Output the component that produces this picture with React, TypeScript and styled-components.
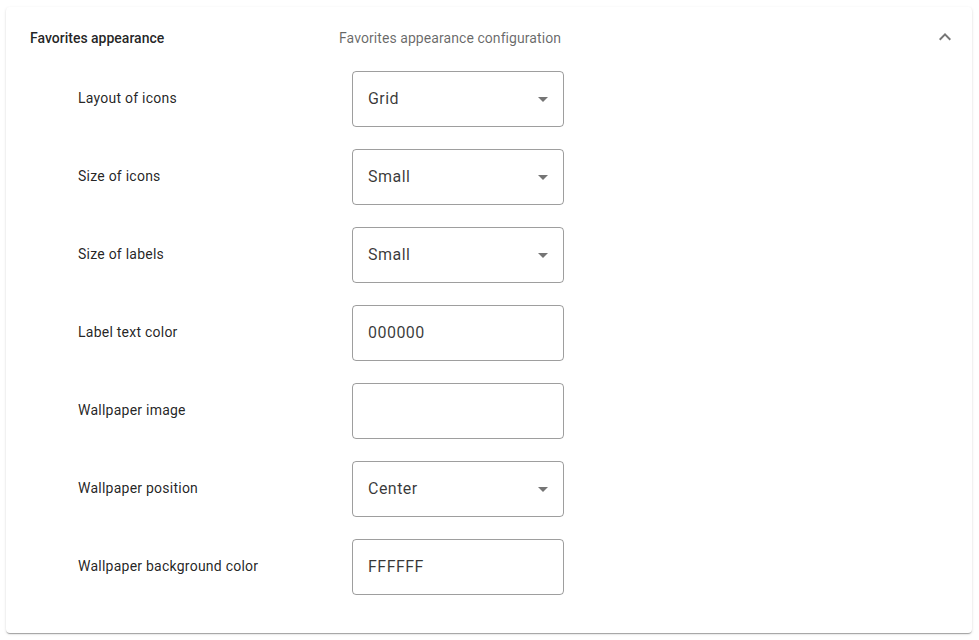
import React from "react";
import styled, { createGlobalStyle } from "styled-components";

const Global = createGlobalStyle`
  html, body { margin: 0; padding: 0; background: #ffffff; }
  body { font-family: Roboto, "Liberation Sans", Arial, sans-serif; }
  * { box-sizing: border-box; }
`;

const Page = styled.div`
  padding: 7px 7px 7px 6px;
`;

const Card = styled.section`
  background: #fff;
  border-radius: 4px;
  box-shadow: 0px 2px 1px -1px rgba(0,0,0,0.2), 0px 1px 1px 0px rgba(0,0,0,0.14), 0px 1px 3px 0px rgba(0,0,0,0.12);
  padding-bottom: 38px;
`;

const Header = styled.div`
  height: 64px;
  display: flex;
  align-items: center;
  padding: 0 15px 2px 24px;
`;

const Title = styled.div`
  width: 309px;
  font-size: 14px;
  font-weight: 500;
  color: rgba(0,0,0,0.87);
`;

const Subtitle = styled.div`
  flex: 1;
  font-size: 14px;
  letter-spacing: 0.07px;
  color: rgba(0,0,0,0.6);
`;

const ChevronBox = styled.div`
  width: 24px;
  height: 24px;
  display: flex;
  align-items: center;
  justify-content: center;
  color: rgba(0,0,0,0.54);
  margin-top: -2px;
`;

const Rows = styled.div`
  display: flex;
  flex-direction: column;
  gap: 22px;
  padding-left: 72px;
`;

const Row = styled.div`
  display: grid;
  grid-template-columns: 274px 212px;
  align-items: center;
`;

const Label = styled.div`
  font-size: 14px;
  letter-spacing: 0.24px;
  padding-bottom: 2px;
  color: rgba(0,0,0,0.87);
`;

const Field = styled.div`
  height: 56px;
  border: 1px solid rgba(0,0,0,0.38);
  border-radius: 4px;
  display: flex;
  align-items: center;
  padding: 0 14px 0 15px;
  font-size: 16px;
  color: rgba(0,0,0,0.78);
  letter-spacing: 0.47px;
`;

const Value = styled.span`
  flex: 1;
  padding-bottom: 2px;
`;

const Arrow = styled.svg`
  width: 24px;
  height: 24px;
  margin-right: -6px;
  fill: rgba(0,0,0,0.54);
`;

type Item = { label: string; value: string; select?: boolean };

const items: Item[] = [
  { label: "Layout of icons", value: "Grid", select: true },
  { label: "Size of icons", value: "Small", select: true },
  { label: "Size of labels", value: "Small", select: true },
  { label: "Label text color", value: "000000" },
  { label: "Wallpaper image", value: "" },
  { label: "Wallpaper position", value: "Center", select: true },
  { label: "Wallpaper background color", value: "FFFFFF" },
];

export default function App() {
  return (
    <>
      <Global />
      <Page>
        <Card>
          <Header>
            <Title>Favorites appearance</Title>
            <Subtitle>Favorites appearance configuration</Subtitle>
            <ChevronBox>
              <svg width="24" height="24" viewBox="0 0 24 24" fill="currentColor">
                <path d="M12 8l-6 6 1.41 1.41L12 10.83l4.59 4.58L18 14z" />
              </svg>
            </ChevronBox>
          </Header>
          <Rows>
            {items.map((it) => (
              <Row key={it.label}>
                <Label>{it.label}</Label>
                <Field>
                  <Value>{it.value}</Value>
                  {it.select && (
                    <Arrow viewBox="0 0 24 24">
                      <path d="M7 10l5 5 5-5z" />
                    </Arrow>
                  )}
                </Field>
              </Row>
            ))}
          </Rows>
        </Card>
      </Page>
    </>
  );
}
